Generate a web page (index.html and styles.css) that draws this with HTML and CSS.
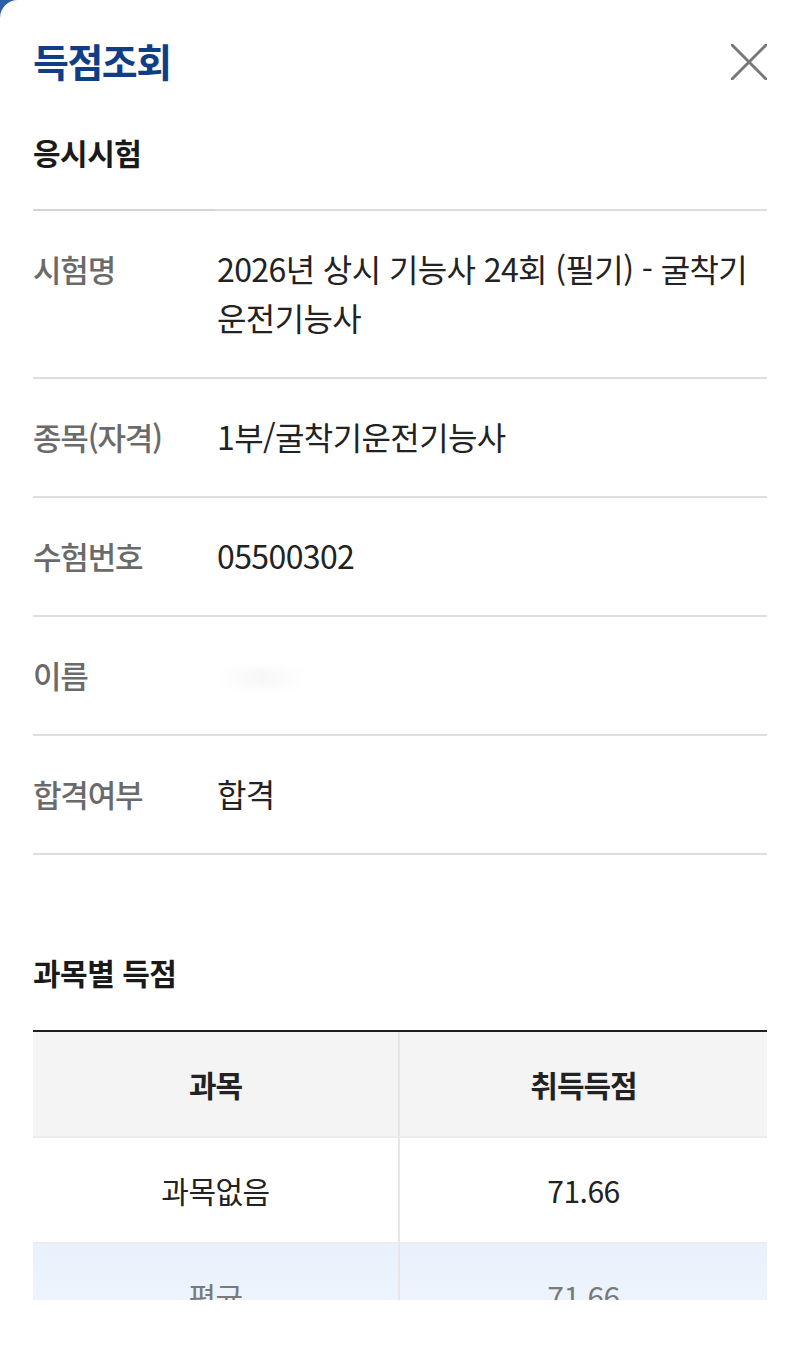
FILE: index.html
```html
<!DOCTYPE html>
<html lang="ko">
<head>
<meta charset="utf-8">
<title>득점조회</title>
<link rel="stylesheet" href="styles.css">
</head>
<body>
<div class="sheet">
  <div class="scroll">
    <header class="head">
      <h1 class="title">득점조회</h1>
      <button class="close" aria-label="닫기">
        <svg width="36" height="36" viewBox="0 0 36 36"><path d="M1 1 L35 35 M35 1 L1 35" stroke="#777" stroke-width="3" stroke-linecap="round" fill="none"/></svg>
      </button>
    </header>

    <h2 class="sec-title first">응시시험</h2>
    <dl class="info">
      <div class="row"><dt>시험명</dt><dd>2026년 상시 기능사 24회 (필기) - 굴착기<br>운전기능사</dd></div>
      <div class="row"><dt>종목(자격)</dt><dd>1부/굴착기운전기능사</dd></div>
      <div class="row"><dt>수험번호</dt><dd>05500302</dd></div>
      <div class="row"><dt>이름</dt><dd><span class="blur"></span></dd></div>
      <div class="row"><dt>합격여부</dt><dd>합격</dd></div>
    </dl>

    <h2 class="sec-title second">과목별 득점</h2>
    <div class="score">
      <div class="cell th">과목</div>
      <div class="cell th">취득득점</div>
      <div class="cell">과목없음</div>
      <div class="cell">71.66</div>
      <div class="cell avg">평균</div>
      <div class="cell avg">71.66</div>
    </div>
  </div>
</div>
</body>
</html>
```

FILE: styles.css
```css
html, body {
  margin: 0;
  padding: 0;
}
body {
  background: #2f5fa8;
  font-family: "Noto Sans CJK KR", "Noto Sans", sans-serif;
  width: 800px;
  height: 1351px;
  overflow: hidden;
}
.sheet {
  background: #fff;
  height: 1351px;
  border-radius: 18px 0 0 0;
  overflow: hidden;
}
.scroll {
  height: 1300px;
  overflow: hidden;
  padding: 0 33px;
}
.head {
  display: flex;
  justify-content: space-between;
  align-items: center;
  height: 120px;
}
.title {
  margin: 0;
  font-size: 39px;
  font-weight: 700;
  color: #0f3e87;
  letter-spacing: -1.5px;
  line-height: 40px;
}
.close {
  border: 0;
  background: none;
  padding: 0;
  width: 36px;
  height: 36px;
  margin-top: 4px;
  display: flex;
}
.sec-title {
  margin: 0;
  font-size: 30px;
  font-weight: 700;
  color: #1a1a1a;
  letter-spacing: -0.5px;
  line-height: 40px;
}
.sec-title.first {
  margin-top: 12px;
  margin-bottom: 37px;
}
.sec-title.second {
  margin-top: 97px;
  margin-bottom: 38px;
}
.info {
  margin: 0;
  border-top: 2px solid #dedede;
  position: relative;
}
.info::before {
  content: "";
  position: absolute;
  left: 0;
  top: -2px;
  width: 182px;
  height: 2px;
  background: #d4d4d4;
}
.row {
  display: grid;
  grid-template-columns: 184px 1fr;
  padding: 33px 0 35px;
  border-bottom: 2px solid #dedede;
  line-height: 49px;
}
.row dt {
  font-size: 31px;
  color: #6a6a6a;
  font-weight: 500;
  letter-spacing: -1.2px;
}
.row dd {
  margin: 0;
  font-size: 32px;
  color: #222;
  letter-spacing: -0.6px;
  min-height: 49px;
  white-space: nowrap;
}
.blur {
  display: inline-block;
  width: 90px;
  height: 20px;
  margin-top: 12px;
  background: linear-gradient(90deg, rgba(0,0,0,0), rgba(0,0,0,0.03), rgba(0,0,0,0));
  filter: blur(3px);
}
.score {
  display: grid;
  grid-template-columns: 367px 1fr;
  border-top: 2px solid #1f1f1f;
}
.cell {
  display: flex;
  align-items: center;
  justify-content: center;
  height: 104px;
  font-size: 30px;
  color: #222;
  border-bottom: 2px solid #ebebeb;
  letter-spacing: -0.5px;
}
.cell:nth-child(odd) {
  border-right: 2px solid #e6e6e6;
}
.cell.th {
  background: #f4f4f4;
  font-weight: 700;
  letter-spacing: -1px;
}
.cell.avg {
  background: linear-gradient(#e8f1fc, #f1f6fd);
  color: #7a7a7a;
  border-bottom: 0;
}
```
